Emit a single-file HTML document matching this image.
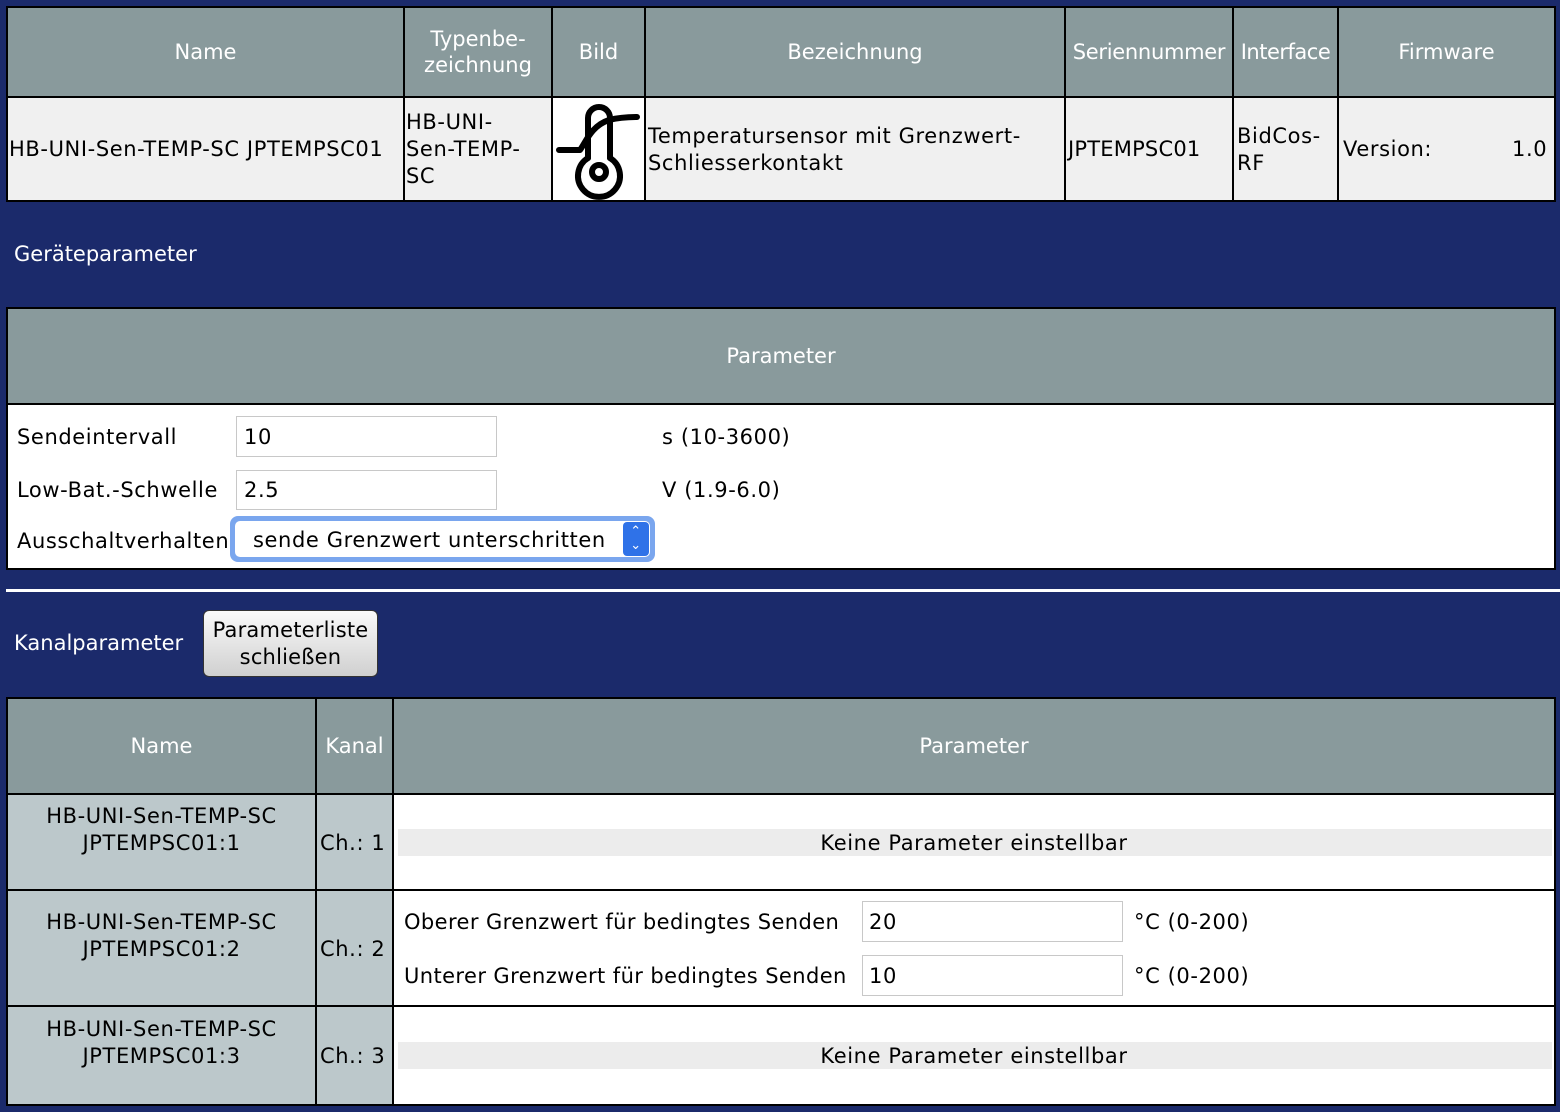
<!DOCTYPE html>
<html><head><meta charset="utf-8"><style>
*{margin:0;padding:0;box-sizing:border-box}
body{width:1560px;height:1112px;background:#1b2a6b;position:relative;overflow:hidden;font-family:"DejaVu Sans","Liberation Sans",sans-serif;font-size:21px;letter-spacing:0.6px;color:#000}
.a{position:absolute}
.hd{background:#899a9c;color:#fff;font-family:"DejaVu Sans",sans-serif;font-size:21px;letter-spacing:0;display:flex;align-items:center;justify-content:center;text-align:center;line-height:26px}
.t{position:absolute;white-space:nowrap;line-height:27px}
.w{color:#fff;font-size:21px;letter-spacing:0}
.inp{position:absolute;background:#fff;border:1px solid #c8c8c8}
</style></head><body>
<div class="a" style="left:6px;top:6px;width:1550px;height:196px;background:#000"></div>
<div class="a hd" style="left:8px;top:8px;width:395px;height:88px">Name</div>
<div class="a hd" style="left:405px;top:8px;width:146px;height:88px">Typenbe-<br>zeichnung</div>
<div class="a hd" style="left:553px;top:8px;width:91px;height:88px">Bild</div>
<div class="a hd" style="left:646px;top:8px;width:418px;height:88px">Bezeichnung</div>
<div class="a hd" style="left:1066px;top:8px;width:166px;height:88px;letter-spacing:-0.3px">Seriennummer</div>
<div class="a hd" style="left:1234px;top:8px;width:103px;height:88px;letter-spacing:-0.5px">Interface</div>
<div class="a hd" style="left:1339px;top:8px;width:215px;height:88px">Firmware</div>
<div class="a" style="left:8px;top:98px;width:395px;height:102px;background:#f0f0f0"></div>
<div class="a" style="left:405px;top:98px;width:146px;height:102px;background:#f0f0f0"></div>
<div class="a" style="left:553px;top:98px;width:91px;height:102px;background:#fff"></div>
<div class="a" style="left:646px;top:98px;width:418px;height:102px;background:#f0f0f0"></div>
<div class="a" style="left:1066px;top:98px;width:166px;height:102px;background:#f0f0f0"></div>
<div class="a" style="left:1234px;top:98px;width:103px;height:102px;background:#f0f0f0"></div>
<div class="a" style="left:1339px;top:98px;width:215px;height:102px;background:#f0f0f0"></div>
<div class="t" style="left:9px;top:136px">HB-UNI-Sen-TEMP-SC JPTEMPSC01</div>
<div class="t" style="left:406px;top:109px">HB-UNI-<br>Sen-TEMP-<br>SC</div>
<svg class="a" style="left:553px;top:98px" width="91" height="102" viewBox="0 0 91 102">
<g fill="none" stroke="#000" stroke-width="6" stroke-linecap="round">
<path d="M35 60 V20 a11 11 0 0 1 22 0 V60"/>
<path d="M35 60 a21 21 0 1 0 22 0"/>
<circle cx="46" cy="74" r="7"/>
<path d="M6 52 H27 M27 52 C33 44 38 28 56 22 C64 20 74 19 84 19"/>
</g></svg>
<div class="t" style="left:648px;top:123px">Temperatursensor mit Grenzwert-<br>Schliesserkontakt</div>
<div class="t" style="left:1068px;top:136px;letter-spacing:0.2px">JPTEMPSC01</div>
<div class="t" style="left:1237px;top:123px">BidCos-<br>RF</div>
<div class="t" style="left:1343px;top:136px">Version:</div>
<div class="t" style="left:1512px;top:136px">1.0</div>

<div class="t w" style="left:14px;top:241px">Geräteparameter</div>

<div class="a" style="left:6px;top:307px;width:1550px;height:263px;background:#000"></div>
<div class="a hd" style="left:8px;top:309px;width:1546px;height:94px">Parameter</div>
<div class="a" style="left:8px;top:405px;width:1546px;height:163px;background:#fff"></div>
<div class="t" style="left:17px;top:424px">Sendeintervall</div>
<div class="inp" style="left:236px;top:416px;width:261px;height:41px"></div>
<div class="t" style="left:244px;top:424px">10</div>
<div class="t" style="left:662px;top:424px">s (10-3600)</div>
<div class="t" style="left:17px;top:477px">Low-Bat.-Schwelle</div>
<div class="inp" style="left:236px;top:470px;width:261px;height:40px"></div>
<div class="t" style="left:244px;top:477px">2.5</div>
<div class="t" style="left:662px;top:477px">V (1.9-6.0)</div>
<div class="t" style="left:17px;top:528px">Ausschaltverhalten</div>
<div class="a" style="left:230px;top:516px;width:425px;height:46px;background:#7aa6ee;border-radius:8px"></div>
<div class="a" style="left:235px;top:521px;width:415px;height:36px;background:#fff;border-radius:5px"></div>
<div class="a" style="left:623px;top:522px;width:26px;height:34px;background:#2f72e8;border-radius:4px;color:#fff;font-size:13px;line-height:14px;text-align:center;padding-top:3px">&#8963;<br>&#8964;</div>
<div class="t" style="left:253px;top:527px">sende Grenzwert unterschritten</div>

<div class="a" style="left:6px;top:589px;width:1554px;height:3px;background:#fff"></div>

<div class="t w" style="left:14px;top:630px">Kanalparameter</div>
<div class="a" style="left:203px;top:610px;width:175px;height:67px;border:1px solid #333;border-radius:6px;background:linear-gradient(#fafafa,#d0d0d0);text-align:center;line-height:27px;padding-top:6px;letter-spacing:0.2px">Parameterliste<br>schließen</div>

<div class="a" style="left:6px;top:697px;width:1550px;height:415px;background:#000"></div>
<div class="a hd" style="left:8px;top:699px;width:307px;height:94px">Name</div>
<div class="a hd" style="left:317px;top:699px;width:75px;height:94px">Kanal</div>
<div class="a hd" style="left:394px;top:699px;width:1160px;height:94px">Parameter</div>

<div class="a" style="left:8px;top:795px;width:307px;height:94px;background:#bcc8cb"></div>
<div class="a" style="left:317px;top:795px;width:75px;height:94px;background:#bcc8cb"></div>
<div class="a" style="left:394px;top:795px;width:1160px;height:94px;background:#fff"></div>
<div class="a" style="left:398px;top:829px;width:1154px;height:27px;background:#ececec"></div>
<div class="t" style="left:8px;top:803px;width:307px;text-align:center">HB-UNI-Sen-TEMP-SC<br>JPTEMPSC01:1</div>
<div class="t" style="left:320px;top:830px">Ch.: 1</div>
<div class="t" style="left:394px;top:830px;width:1160px;text-align:center">Keine Parameter einstellbar</div>

<div class="a" style="left:8px;top:891px;width:307px;height:114px;background:#bcc8cb"></div>
<div class="a" style="left:317px;top:891px;width:75px;height:114px;background:#bcc8cb"></div>
<div class="a" style="left:394px;top:891px;width:1160px;height:114px;background:#fff"></div>
<div class="t" style="left:8px;top:909px;width:307px;text-align:center">HB-UNI-Sen-TEMP-SC<br>JPTEMPSC01:2</div>
<div class="t" style="left:320px;top:936px">Ch.: 2</div>
<div class="t" style="left:404px;top:909px;letter-spacing:0.4px">Oberer Grenzwert für bedingtes Senden</div>
<div class="inp" style="left:862px;top:901px;width:261px;height:41px"></div>
<div class="t" style="left:869px;top:909px">20</div>
<div class="t" style="left:1134px;top:909px">°C (0-200)</div>
<div class="t" style="left:404px;top:963px;letter-spacing:0.4px">Unterer Grenzwert für bedingtes Senden</div>
<div class="inp" style="left:862px;top:955px;width:261px;height:41px"></div>
<div class="t" style="left:869px;top:963px">10</div>
<div class="t" style="left:1134px;top:963px">°C (0-200)</div>

<div class="a" style="left:8px;top:1007px;width:307px;height:97px;background:#bcc8cb"></div>
<div class="a" style="left:317px;top:1007px;width:75px;height:97px;background:#bcc8cb"></div>
<div class="a" style="left:394px;top:1007px;width:1160px;height:97px;background:#fff"></div>
<div class="a" style="left:398px;top:1042px;width:1154px;height:27px;background:#ececec"></div>
<div class="t" style="left:8px;top:1016px;width:307px;text-align:center">HB-UNI-Sen-TEMP-SC<br>JPTEMPSC01:3</div>
<div class="t" style="left:320px;top:1043px">Ch.: 3</div>
<div class="t" style="left:394px;top:1043px;width:1160px;text-align:center">Keine Parameter einstellbar</div>
<div class="a" style="left:0;top:1104px;width:1560px;height:8px;background:#1b2a6b"></div>
<div class="a" style="left:6px;top:1104px;width:1550px;height:2px;background:#000"></div>
</body></html>
